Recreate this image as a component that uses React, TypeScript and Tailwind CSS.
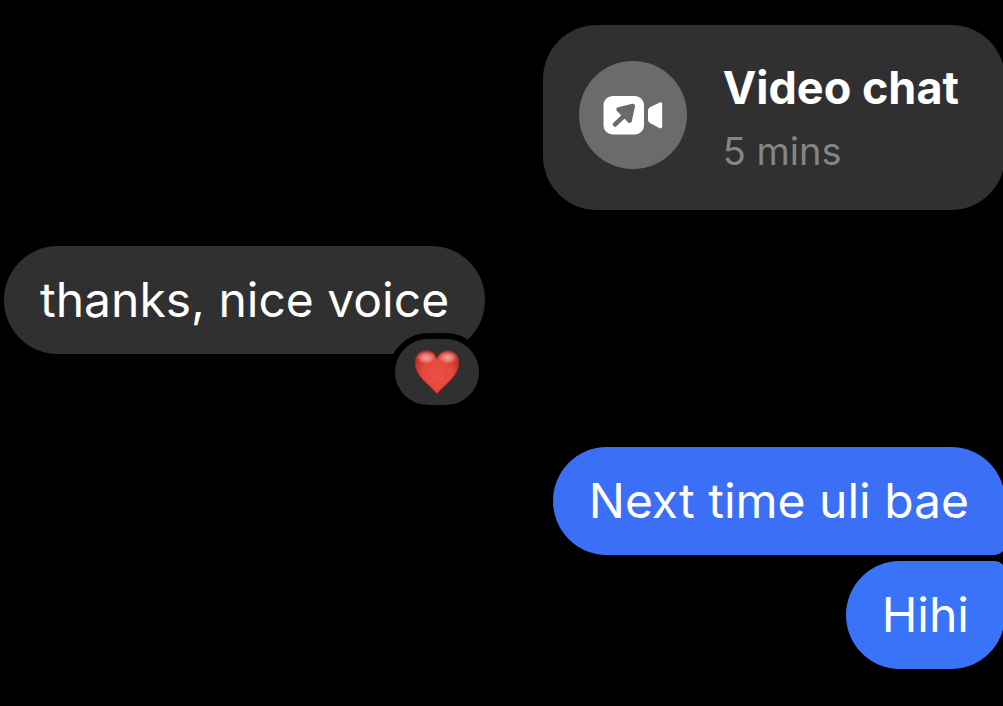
import type { ReactNode } from 'react'
import clsx from 'clsx'

function VideoCallIcon() {
  return (
    <svg viewBox="0 0 60 40" className="h-10 w-15" aria-hidden="true">
      <rect x="0.5" y="1" width="40.5" height="38.500" rx="9" fill="#fff" />
      <path
        d="M45 16c0-1.800.8-3 2.300-3.900l9-4.400c1.500-.9 2.900-.2 2.900 1.500v22.200c0 1.700-1.400 2.400-2.900 1.500l-9-4.700c-1.500-.8-2.300-2-2.300-3.800z"
        fill="#fff"
      />
      <path
        d="M15.500 14.500 29.800 11 26.600 25.800 23.500 22.500 18.500 17.500z"
        fill="#6b6b6b"
        stroke="#6b6b6b"
        strokeWidth="4.500"
        strokeLinejoin="round"
      />
      <path d="M12 29.500 22 20" stroke="#6b6b6b" strokeWidth="4.500" strokeLinecap="round" />
    </svg>
  )
}

function Heart() {
  return (
    <svg viewBox="0 0 44 44" className="size-11" role="img" aria-label="Red heart">
      <defs>
        <radialGradient id="heart-fill" cx="0.5" cy="0.55" r="0.6">
          <stop offset="0" stopColor="#ee5144" />
          <stop offset="0.6" stopColor="#e4473b" />
          <stop offset="1" stopColor="#bd2a22" />
        </radialGradient>
        <radialGradient id="heart-shine">
          <stop offset="0" stopColor="#ffe3e0" stopOpacity="0.65" />
          <stop offset="0.6" stopColor="#ffc4be" stopOpacity="0.4" />
          <stop offset="1" stopColor="#ff8a80" stopOpacity="0" />
        </radialGradient>
      </defs>
      <path
        d="M22 9C20 3.500 16.200.8 11.500.8 5 .8.200 5.600.200 12.800c0 10.200 8 17.400 14.800 23.700 2.700 2.500 5.200 5.300 7 7.300 1.800-2 4.300-4.800 7-7.300 6.800-6.300 14.800-13.500 14.800-23.700C43.800 5.600 39 .8 32.500.8 27.800.8 24 3.500 22 9z"
        fill="url(#heart-fill)"
        stroke="#b1261e"
        strokeWidth="0.8"
      />
      <ellipse cx="11" cy="7.500" rx="10" ry="6.500" fill="url(#heart-shine)" />
      <ellipse cx="33" cy="7.500" rx="10" ry="6.500" fill="url(#heart-shine)" />
    </svg>
  )
}

function Bubble({ children, className }: { children: ReactNode; className?: string }) {
  return (
    <div className={clsx('relative px-9 py-6 text-5xl leading-[60px] whitespace-nowrap', className)}>
      {children}
    </div>
  )
}

export default function App() {
  return (
    <main className="flex min-h-screen flex-col overflow-hidden bg-black pt-[25px] pb-9 font-['Inter','Liberation_Sans',sans-serif] text-white">
      <div className="-mr-0.5 flex items-start gap-9 self-end rounded-[54px] bg-[#303030] px-9 pt-9 pb-[35px]">
        <div className="flex size-27 shrink-0 items-center justify-center rounded-full bg-[#6b6b6b]">
          <VideoCallIcon />
        </div>
        <div className="pr-2.5 whitespace-nowrap">
          <h2 className="text-[45px] leading-[54px] font-bold">Video chat</h2>
          <p className="mt-3 text-[38px] leading-[48px] text-[#858585]">5 mins</p>
        </div>
      </div>

      <Bubble className="mt-9 ml-1 self-start rounded-full bg-[#303030]">
        <p>thanks, nice voice</p>
        <div className="absolute right-0 -bottom-[57px] flex h-[78px] w-24 items-center justify-center rounded-full border-6 border-black bg-[#303030]">
          <Heart />
        </div>
      </Bubble>

      <div className="mt-[93px] -mr-0.5 flex flex-col items-end gap-1.5">
        <Bubble className="rounded-[54px] rounded-br-[10px] bg-[#3b6ff6]">
          <p>Next time uli bae</p>
        </Bubble>
        <Bubble className="rounded-[54px] rounded-tr-[10px] bg-[#3973f7]">
          <p>Hihi</p>
        </Bubble>
      </div>
    </main>
  )
}
